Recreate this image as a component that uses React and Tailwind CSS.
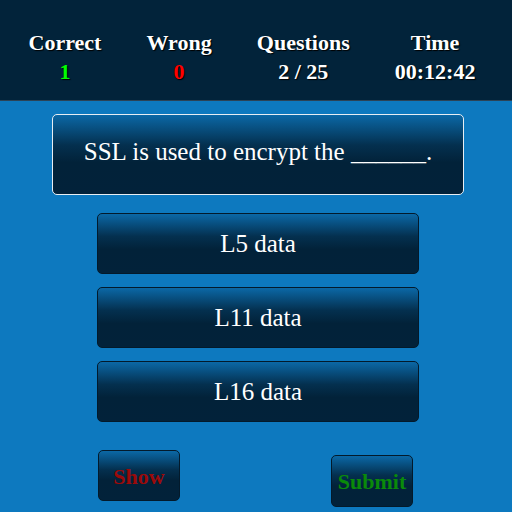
import React from 'react';

const stats = [
  { label: 'Correct', value: '1', color: 'text-[#00ff00]' },
  { label: 'Wrong', value: '0', color: 'text-[#ff0000]' },
  { label: 'Questions', value: '2 / 25', color: 'text-white' },
  { label: 'Time', value: '00:12:42', color: 'text-white' },
];

const answers = ['L5 data', 'L11 data', 'L16 data'];

const grad = 'bg-[linear-gradient(to_bottom,#0b68a6_0%,#04304f_38%,#022239_60%,#02223a_100%)]';

const App = () => {
  return (
    <div className="w-[512px] h-[512px] overflow-hidden bg-[#0d79bf] font-['Liberation_Serif',serif]">
      {/* Score header */}
      <div className="h-[101px] bg-[#02233a] border-b border-[#2b4356] flex justify-around pl-[6px] pr-[14px] pt-[28px]">
        {stats.map((s) => (
          <div key={s.label} className="flex flex-col items-center text-[22px] leading-[29px] font-bold [text-shadow:1px_1px_1px_#000]">
            <span className="text-white">{s.label}</span>
            <span className={s.color}>{s.value}</span>
          </div>
        ))}
      </div>

      <div className="flex flex-col items-center pl-[4px]">
        {/* Question */}
        <div className={`mt-[13px] w-[412px] h-[81px] pb-[6px] rounded-[5px] border border-[#e8eef3] ${grad} flex items-center justify-center text-white text-[25px]`}>
          SSL is used to encrypt the ______.
        </div>

        {/* Answers */}
        <div className="mt-[18px] flex flex-col gap-[13px]">
          {answers.map((a) => (
            <button
              key={a}
              className={`w-[322px] h-[61px] rounded-[5px] border border-[#031a2b] ${grad} text-white text-[25px] flex items-center justify-center`}
            >
              {a}
            </button>
          ))}
        </div>

        {/* Actions */}
        <div className="mt-[28px] w-[322px] flex justify-between items-start pl-[1px] pr-[6px]">
          <button className={`w-[82px] h-[51px] pt-[1px] rounded-[5px] border border-[#031a2b] ${grad} text-[#9b0a0a] text-[22px] font-bold`}>
            Show
          </button>
          <button className={`mt-[5px] w-[82px] h-[52px] pt-[1px] rounded-[5px] border border-[#031a2b] ${grad} text-[#0a8a0a] text-[22px] font-bold`}>
            Submit
          </button>
        </div>
      </div>
    </div>
  );
};

export default App;
